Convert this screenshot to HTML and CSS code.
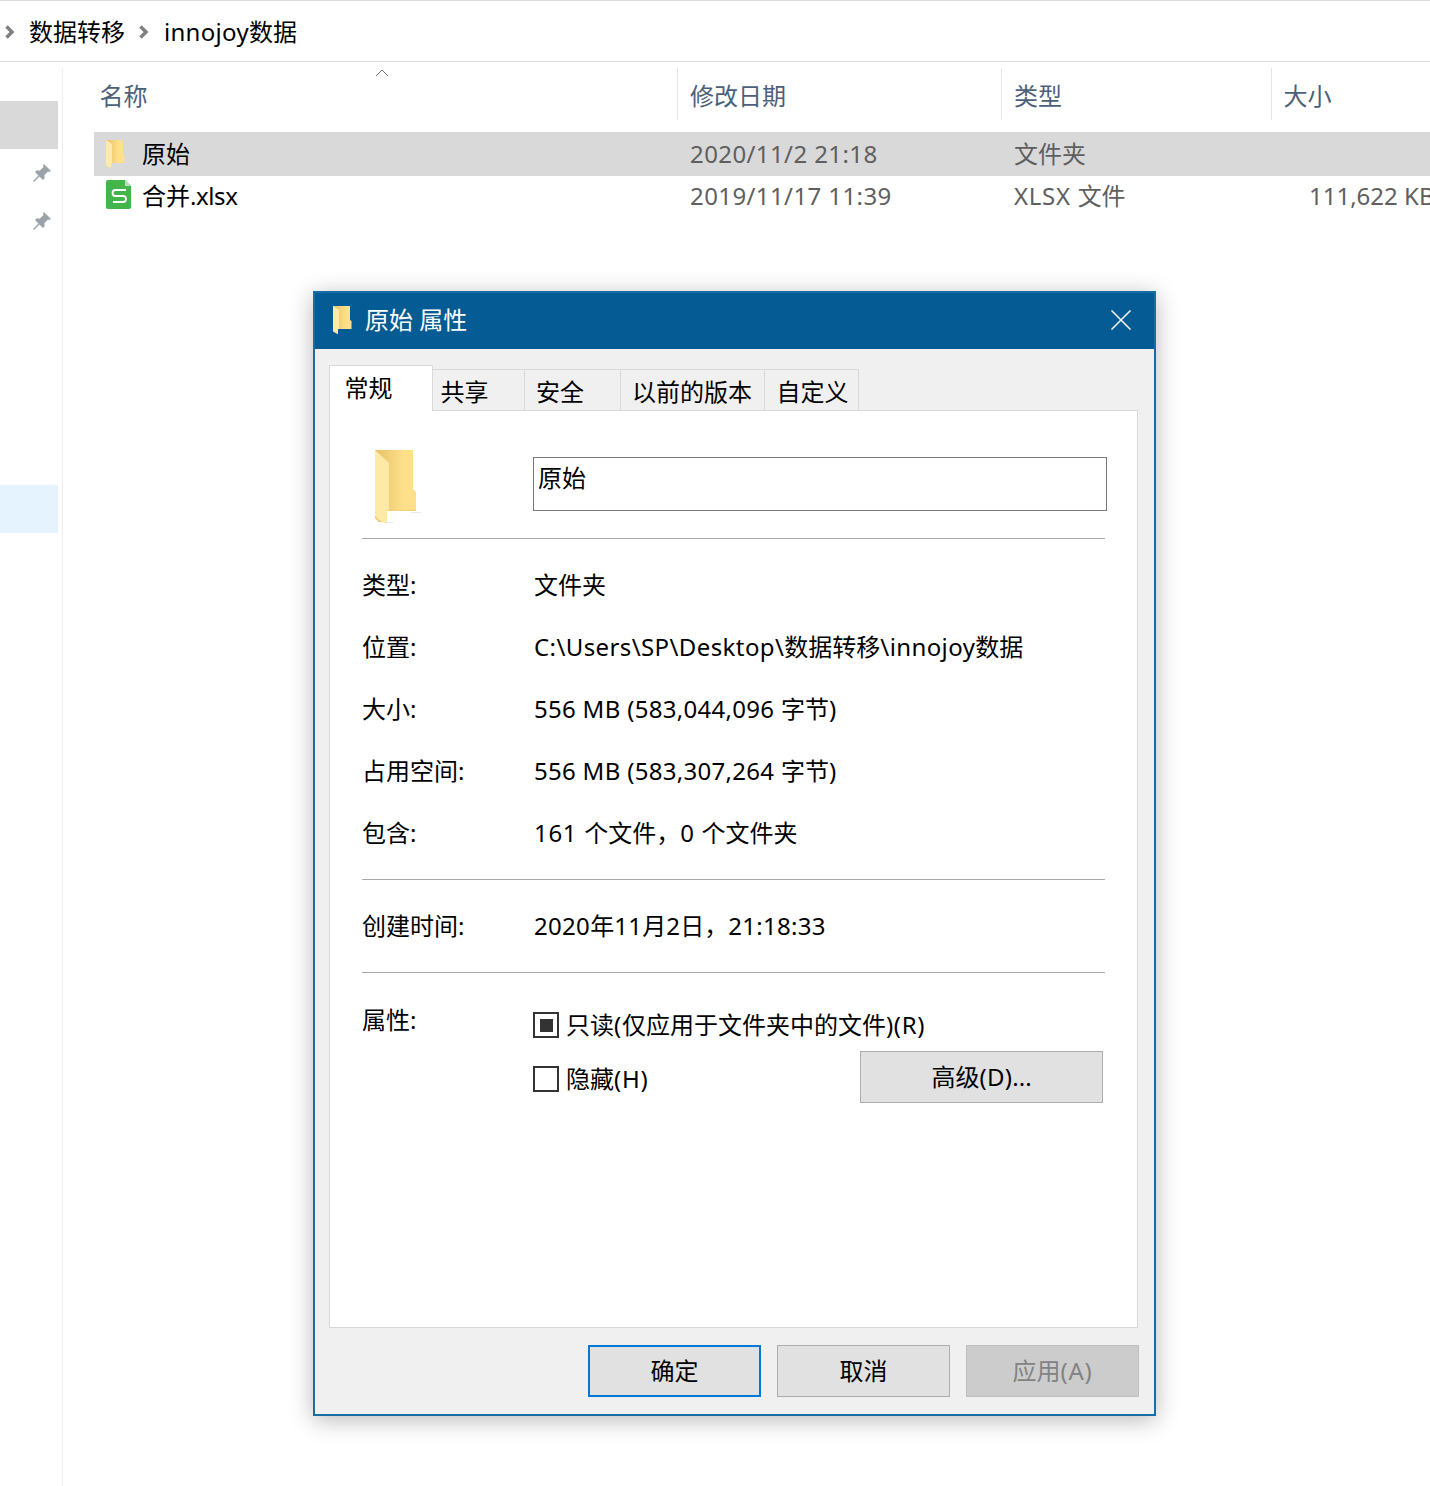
FILE: index.html
```html
<!DOCTYPE html>
<html lang="zh-CN">
<head>
<meta charset="utf-8">
<title>原始 属性</title>
<link rel="stylesheet" href="styles.css">
</head>
<body>
<svg class="defs" width="0" height="0">
  <defs>
    <linearGradient id="fb" x1="0" x2="1" y1="0" y2="0"><stop offset="0" stop-color="#e6c168"/><stop offset="0.7" stop-color="#ffe08a"/><stop offset="1" stop-color="#ffe08a"/></linearGradient>
    <symbol id="folder" viewBox="0 0 46 76">
      <path d="M36 62H46V63H36ZM12 72H18V73H12Z" fill="#e9e9e9"/>
      <path d="M0 0H38V39L41 42V61H12V72L4 72L0 68Z" fill="url(#fb)"/>
      <path d="M0 0L14 13V61L12 61V74L4 70L0 66Z" fill="#ffe9a6"/>
      <path d="M12 60H41V61H12Z" fill="#f2d27c"/>
    </symbol>
    <symbol id="folder-s" viewBox="0 0 19 28">
      <path d="M0 0H17V14L18.500 15V23H5V28L1 26L0 25Z" fill="url(#fb)"/>
      <path d="M0 0L6 4V23H5V28L1 26L0 25Z" fill="#ffeaa8"/>
    </symbol>
    <symbol id="pin" viewBox="0 0 20 20">
      <path d="M12 1L19 8L17.500 9L16 8.500L12.500 12L12.500 15.500L11 17L7.500 13.500L2 19L1 18L6.500 12.500L3 9L4.500 7.500L8 7.500L11.500 4L11 2.500Z" fill="#9aa3aa"/>
    </symbol>
  </defs>
</svg>
<header class="crumbs">
  <svg class="chev" viewBox="0 0 10 14"><path d="M1.500 1.500L7 7L1.500 12.500" fill="none" stroke="#808080" stroke-width="3.500"/></svg>
  <span class="crumb">数据转移</span>
  <svg class="chev chev-mid" viewBox="0 0 10 14"><path d="M1.500 1.500L7 7L1.500 12.500" fill="none" stroke="#808080" stroke-width="3.500"/></svg>
  <span class="crumb"><span class="m">innojoy</span>数据</span>
</header>
<div class="explorer">
  <nav class="side">
    <div class="side-item side-grey"></div>
    <div class="side-item side-pin"><svg class="pin"><use href="#pin"/></svg></div>
    <div class="side-item side-pin"><svg class="pin"><use href="#pin"/></svg></div>
    <div class="side-gap"></div>
    <div class="side-item side-blue"></div>
  </nav>
  <main class="list">
    <div class="head">
      <svg class="sort" viewBox="0 0 14 8"><path d="M1 7L7 1L13 7" fill="none" stroke="#6b6b6b" stroke-width="1"/></svg>
      <div class="col c1">名称</div>
      <div class="col c2 sep">修改日期</div>
      <div class="col c3 sep">类型</div>
      <div class="col c4 sep">大小</div>
    </div>
    <div class="row row-sel">
      <div class="cell c1 name"><svg class="ficon"><use href="#folder-s"/></svg><span>原始</span></div>
      <div class="cell c2 dim"><span class="n">2020/11/2 21:18</span></div>
      <div class="cell c3 dim">文件夹</div>
      <div class="cell c4 dim"></div>
    </div>
    <div class="row row-two">
      <div class="cell c1 name">
        <svg class="xicon" viewBox="0 0 25 29"><path d="M2 0H19L25 6V27A2 2 0 0 1 23 29H2A2 2 0 0 1 0 27V2A2 2 0 0 1 2 0Z" fill="#44b549"/><path d="M19 0L25 6H19Z" fill="#b5e2b7"/><path d="M20 10H9.500A3 3 0 0 0 9.500 16H17A3 3 0 0 1 17 22H7" fill="none" stroke="#fff" stroke-width="1.800"/></svg>
        <span>合并<span class="t">.xlsx</span></span>
      </div>
      <div class="cell c2 dim"><span class="n">2019/11/17 11:39</span></div>
      <div class="cell c3 dim"><span><span class="w">XLSX </span>文件</span></div>
      <div class="cell c4 dim size">111,622 KB</div>
    </div>
  </main>
</div>

<section class="dialog">
  <div class="titlebar">
    <svg class="title-icon"><use href="#folder-s"/></svg>
    <span class="title-text">原始 属性</span>
    <svg class="close" viewBox="0 0 20 20"><path d="M0.500 0.500L19.500 19.500M19.500 0.500L0.500 19.500" stroke="#fff" stroke-width="1.500" fill="none"/></svg>
  </div>
  <div class="dbody">
    <div class="tabs">
      <div class="tab tab-on">常规</div>
      <div class="tab t2">共享</div>
      <div class="tab t3">安全</div>
      <div class="tab t4">以前的版本</div>
      <div class="tab t5">自定义</div>
    </div>
    <div class="panel">
      <div class="name-row">
        <svg class="big-folder"><use href="#folder"/></svg>
        <div class="name-input">原始</div>
      </div>
      <hr class="rule">
      <dl class="props props-a">
        <dt>类型:</dt><dd>文件夹</dd>
        <dt>位置:</dt><dd><span class="n">C:\Users\SP\Desktop\</span>数据转移<span class="n">\innojoy</span>数据</dd>
        <dt>大小:</dt><dd><span class="m">556 MB (583,044,096 </span>字节)</dd>
        <dt>占用空间:</dt><dd><span class="m">556 MB (583,307,264 </span>字节)</dd>
        <dt>包含:</dt><dd><span class="w">161 </span>个文件，<span class="w">0 </span>个文件夹</dd>
      </dl>
      <hr class="rule">
      <dl class="props props-b">
        <dt>创建时间:</dt><dd><span class="m">2020</span>年<span class="m">11</span>月<span class="m">2</span>日，<span class="m">21:18:33</span></dd>
      </dl>
      <hr class="rule">
      <div class="attrs">
        <div class="attr-label">属性:</div>
        <div class="attr-body">
          <div class="check-row"><span class="box box-mixed"></span><span>只读<span class="w">(</span>仅应用于文件夹中的文件<span class="w">)(R)</span></span></div>
          <div class="check-row check-row2"><span class="box"></span><span>隐藏<span class="w">(H)</span></span><button class="btn btn-adv">高级<span class="m">(D)</span>...</button></div>
        </div>
      </div>
    </div>
    <div class="foot">
      <button class="btn btn-foot btn-default">确定</button>
      <button class="btn btn-foot">取消</button>
      <button class="btn btn-foot btn-off">应用<span class="w">(A)</span></button>
    </div>
  </div>
</section>
</body>
</html>
```

FILE: styles.css
```css
* { box-sizing: border-box; }
html, body { margin: 0; padding: 0; }
body {
  width: 1430px;
  height: 1486px;
  overflow: hidden;
  position: relative;
  background: #fff;
  color: #000;
  font-family: "Noto Sans", "Noto Sans CJK SC", sans-serif;
  font-size: 24px;
  line-height: 32px;
}
.defs { position: absolute; }
.n { letter-spacing: 0.4px; }
.m { letter-spacing: 0.3px; }
.w { letter-spacing: 0.7px; }
.t { letter-spacing: -0.4px; }

.crumbs {
  height: 62px;
  border-top: 1px solid #dcdcdc;
  border-bottom: 1px solid #dcdcdc;
  display: flex;
  align-items: center;
  padding-top: 2px;
}
.chev { width: 10px; height: 14px; margin-left: 5px; flex: none; }
.crumb { margin-left: 14px; white-space: nowrap; }
.chev-mid { margin-left: 14px; }
.crumb:last-child { margin-left: 15px; }

.explorer { display: flex; height: 1424px; }
.side {
  width: 63px;
  margin-top: 6px;
  border-right: 1px solid #eeeeee;
  padding-top: 33px;
  padding-right: 4px;
  flex: none;
}
.side-item { height: 48px; }
.side-grey { background: #d9d9d9; }
.side-blue { background: #e5f3ff; }
.side-pin { display: flex; align-items: center; justify-content: flex-end; padding-right: 6px; }
.side-gap { height: 240px; }
.pin { width: 20px; height: 20px; }

.list { flex: 1; margin-left: 31px; min-width: 0; overflow: hidden; }
.head { display: flex; height: 70px; padding-top: 6px; position: relative; }
.sort { position: absolute; left: 281px; top: 7px; width: 14px; height: 8px; }
.col { height: 52px; line-height: 55px; color: #4c607a; }
.c1 { width: 583px; padding-left: 5.5px; flex: none; }
.c2 { width: 324px; padding-left: 12px; flex: none; }
.c3 { width: 270px; padding-left: 12px; flex: none; }
.c4 { flex: none; width: 159px; padding-left: 11.5px; }
.sep { border-left: 1px solid #e5e5e5; }

.row { display: flex; height: 42px; align-items: center; white-space: nowrap; }
.row-sel { height: 44px; background: #d9d9d9; }
.row-two { height: 40px; }
.cell { height: 100%; display: flex; align-items: center; }
.dim { color: #5f5f5f; }
.c2.cell { padding-left: 13px; }
.c3.cell { padding-left: 13px; }
.size { justify-content: flex-start; padding-left: 38px !important; }
.name { padding-left: 12px; }
.ficon { width: 19px; height: 28px; flex: none; margin-right: 17px; }
.xicon { width: 25px; height: 29px; flex: none; margin-right: 11px; margin-bottom: 3px; }

.dialog {
  position: absolute;
  left: 313px;
  top: 291px;
  width: 843px;
  height: 1125px;
  border: 2px solid #1a6ca5;
  background: #f0f0f0;
  box-shadow: 0 4px 22px rgba(0, 0, 0, 0.28);
  display: flex;
  flex-direction: column;
}
.titlebar {
  height: 56px;
  background: #055c94;
  color: #fff;
  display: flex;
  align-items: center;
  padding-left: 18px;
  padding-bottom: 2px;
  flex: none;
}
.title-icon { width: 19px; height: 28px; flex: none; }
.title-text { margin-left: 13px; flex: 1; }
.close { width: 20px; height: 20px; margin-right: 23px; flex: none; }

.dbody { flex: 1; padding: 16px 15px 0 14px; display: flex; flex-direction: column; }
.tabs { display: flex; height: 46px; align-items: flex-end; position: relative; z-index: 1; flex: none; }
.tab {
  height: 42px;
  background: #f0f0f0;
  border: 1px solid #d9d9d9;
  border-left: 0;
  border-bottom: 1px solid #d9d9d9;
  padding-left: 7.5px;
  line-height: 43px;
  white-space: nowrap;
}
.tab-on {
  width: 104px;
  height: 46px;
  background: #fff;
  border-left: 1px solid #d9d9d9;
  border-bottom: 0;
  padding-left: 14.5px;
  line-height: 43px;
}
.t2 { width: 92px; }
.t3 { width: 96px; padding-left: 11px; }
.t4 { width: 144px; padding-left: 11px; }
.t5 { width: 94px; padding-left: 11.5px; }

.panel {
  flex: none;
  height: 918px;
  background: #fff;
  border: 1px solid #d9d9d9;
  margin-top: -1px;
  padding: 0 32px;
  width: 809px;
}
.name-row { display: flex; height: 127px; padding-top: 39px; }
.big-folder { width: 46px; height: 76px; margin-left: 13px; flex: none; }
.name-input {
  width: 574px;
  height: 54px;
  margin-top: 7px;
  margin-left: 112px;
  border: 1px solid #7a7a7a;
  padding: 3px 4px;
  line-height: 34px;
  flex: none;
}
.rule { border: 0; height: 1px; background: #a9a9a9; margin: 0; width: 743px; }
.props { display: grid; grid-template-columns: 172px 1fr; margin: 0; }
.props dt, .props dd { margin: 0; height: 62px; line-height: 60px; white-space: nowrap; }
.props-a { padding: 16px 0 14px; }
.props-b { padding: 16px 0 14px; }

.attrs { display: flex; padding-top: 31px; }
.attr-label { width: 172px; flex: none; }
.attr-body { flex: 1; padding-top: 5px; }
.check-row { display: flex; align-items: center; height: 32px; }
.check-row2 { margin-top: 22px; position: relative; }
.box { width: 26px; height: 26px; margin-left: -1px; border: 2px solid #333; margin-right: 7px; flex: none; display: flex; align-items: center; justify-content: center; }
.box-mixed::after { content: ""; width: 13px; height: 13px; background: #333; }

.btn {
  font: inherit;
  color: #000;
  background: #e1e1e1;
  border: 1px solid #adadad;
  height: 52px;
  padding: 0;
  line-height: 48px;
}
.btn-adv { position: absolute; left: 326px; top: -12px; width: 243px; }
.foot { display: flex; justify-content: flex-end; gap: 16px; margin-top: 17px; }
.btn-foot { width: 173px; }
.btn-default { border: 2px solid #0078d7; }
.btn-off { background: #cccccc; border-color: #bfbfbf; color: #838383; }
```
